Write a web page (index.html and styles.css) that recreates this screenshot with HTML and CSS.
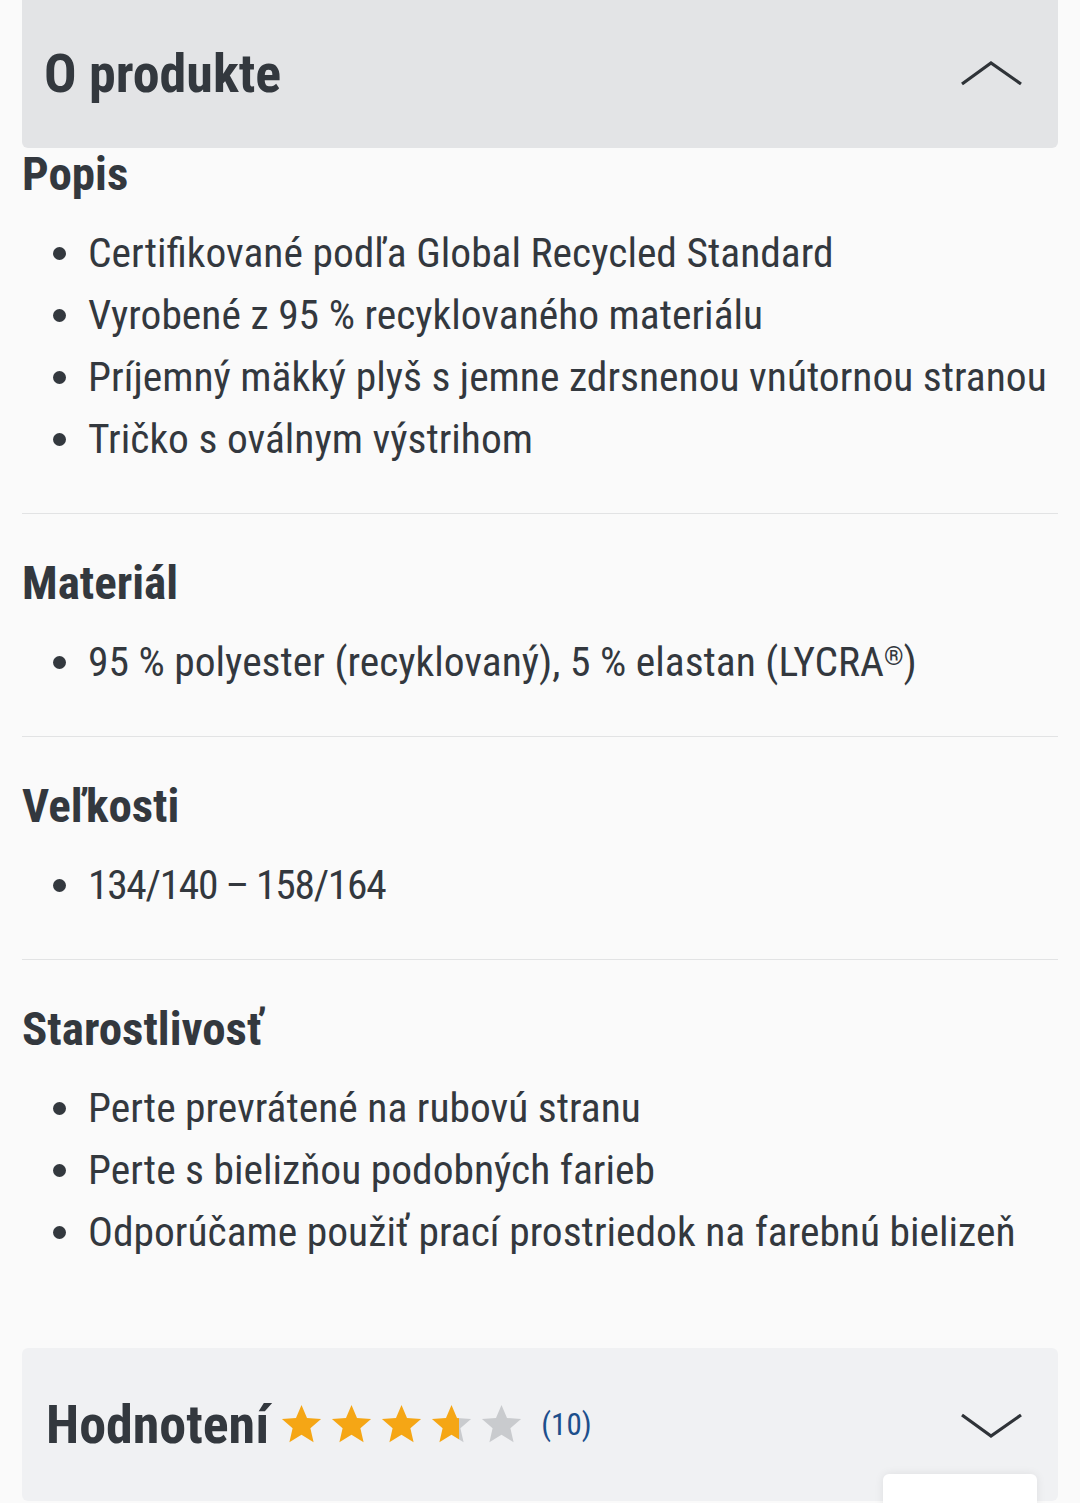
FILE: index.html
```html
<!DOCTYPE html>
<html lang="sk">
<head>
<meta charset="utf-8">
<title>O produkte</title>
<link rel="stylesheet" href="styles.css">
</head>
<body>
<div class="page">
  <div class="acc-head">
    <h2 class="acc-title">O produkte</h2>
    <svg class="chev" width="62" height="26" viewBox="0 0 62 26"><polyline points="1,23 30,2 60,23" fill="none" stroke="#2f3338" stroke-width="3.2" stroke-linejoin="miter"/></svg>
  </div>

  <section class="sec first">
    <h3 class="sec-title">Popis</h3>
    <ul class="list">
      <li>Certifikované podľa Global Recycled Standard</li>
      <li>Vyrobené z 95 % recyklovaného materiálu</li>
      <li>Príjemný mäkký plyš s jemne zdrsnenou vnútornou stranou</li>
      <li>Tričko s oválnym výstrihom</li>
    </ul>
  </section>

  <section class="sec">
    <h3 class="sec-title">Materiál</h3>
    <ul class="list">
      <li>95 % polyester (recyklovaný), 5 % elastan (LYCRA<span class="reg">®</span>)</li>
    </ul>
  </section>

  <section class="sec">
    <h3 class="sec-title">Veľkosti</h3>
    <ul class="list">
      <li><span class="nums">134/140 – 158/164</span></li>
    </ul>
  </section>

  <section class="sec last">
    <h3 class="sec-title">Starostlivosť</h3>
    <ul class="list">
      <li>Perte prevrátené na rubovú stranu</li>
      <li>Perte s bielizňou podobných farieb</li>
      <li>Odporúčame použiť prací prostriedok na farebnú bielizeň</li>
    </ul>
  </section>

  <div class="rating-box">
    <div class="rating-left">
      <h2 class="acc-title">Hodnotení</h2>
      <div class="stars">
        <svg class="star" viewBox="0 0 24 24"><path fill="#f5a615" d="M12 17.27L18.18 21l-1.64-7.03L22 9.24l-7.19-.61L12 2 9.19 8.63 2 9.24l5.46 4.73L5.82 21z"/></svg>
        <svg class="star" viewBox="0 0 24 24"><path fill="#f5a615" d="M12 17.27L18.18 21l-1.64-7.03L22 9.24l-7.19-.61L12 2 9.19 8.63 2 9.24l5.46 4.73L5.82 21z"/></svg>
        <svg class="star" viewBox="0 0 24 24"><path fill="#f5a615" d="M12 17.27L18.18 21l-1.64-7.03L22 9.24l-7.19-.61L12 2 9.19 8.63 2 9.24l5.46 4.73L5.82 21z"/></svg>
        <svg class="star" viewBox="0 0 24 24"><defs><linearGradient id="part" x1="0" x2="1" y1="0" y2="0"><stop offset="0.68" stop-color="#f5a615"/><stop offset="0.68" stop-color="#c9cbce"/></linearGradient></defs><path fill="url(#part)" d="M12 17.27L18.18 21l-1.64-7.03L22 9.24l-7.19-.61L12 2 9.19 8.63 2 9.24l5.46 4.73L5.82 21z"/></svg>
        <svg class="star" viewBox="0 0 24 24"><path fill="#c9cbce" d="M12 17.27L18.18 21l-1.64-7.03L22 9.24l-7.19-.61L12 2 9.19 8.63 2 9.24l5.46 4.73L5.82 21z"/></svg>
      </div>
      <span class="count">(10)</span>
    </div>
    <svg class="chev" width="62" height="26" viewBox="0 0 62 26"><polyline points="1,3 30,24 60,3" fill="none" stroke="#2f3338" stroke-width="3.2" stroke-linejoin="miter"/></svg>
    <div class="popup"></div>
  </div>
</div>
</body>
</html>
```

FILE: styles.css
```css
html, body {
  margin: 0;
  padding: 0;
  background: #fafafa;
}
body {
  font-family: "Roboto", "DejaVu Sans Condensed", sans-serif;
  font-stretch: 75%;
  color: #33383e;
  height: 1503px;
  overflow: hidden;
}
.page {
  padding: 0 22px;
}
.acc-head {
  height: 148px;
  background: #e3e4e6;
  border-radius: 0 0 6px 6px;
  display: flex;
  align-items: center;
  justify-content: space-between;
  padding: 0 35px 0 22px;
  box-sizing: border-box;
}
.acc-title {
  margin: 0;
  font-size: 54px;
  font-weight: 700;
  line-height: 60px;
  color: #33383e;
}
.chev {
  display: block;
  flex-shrink: 0;
}
.sec {
  padding: 43px 0 43px;
  border-bottom: 1px solid #e2e3e4;
}
.sec.first {
  padding-top: 0;
}
.sec.last {
  border-bottom: none;
  padding-bottom: 0;
  margin-bottom: 85px;
}
.sec-title {
  margin: 0;
  font-size: 47px;
  line-height: 52px;
  font-weight: 700;
  font-stretch: 81%;
}
.list {
  list-style: none;
  margin: 22px 0 0;
  padding: 0;
}
.list li {
  display: flex;
  align-items: center;
  font-size: 41.5px;
  line-height: 62px;
  white-space: nowrap;
}
.list li::before {
  content: "";
  width: 13px;
  height: 13px;
  border-radius: 50%;
  background: #33383e;
  flex-shrink: 0;
  margin: 0 22px 0 31px;
}
.nums {
  letter-spacing: -1.3px;
}
.reg {
  font-size: 0.6em;
  align-self: flex-start;
  line-height: 1;
  margin-top: 14px;
}
.rating-box {
  position: relative;
  height: 153px;
  background: #f0f1f3;
  border-radius: 6px;
  display: flex;
  align-items: center;
  justify-content: space-between;
  padding: 0 35px 0 24px;
  box-sizing: border-box;
}
.rating-left {
  display: flex;
  align-items: center;
}
.stars {
  display: flex;
  gap: 3px;
  margin-left: 9px;
}
.star {
  width: 47px;
  height: 47px;
  display: block;
}
.count {
  margin-left: 16px;
  font-size: 31px;
  color: #1d4f8c;
  line-height: 40px;
}
.popup {
  position: absolute;
  right: 21px;
  top: 126px;
  width: 154px;
  height: 60px;
  background: #ffffff;
  border-radius: 6px;
  box-shadow: 0 0 10px rgba(0, 0, 0, 0.08);
}
```
